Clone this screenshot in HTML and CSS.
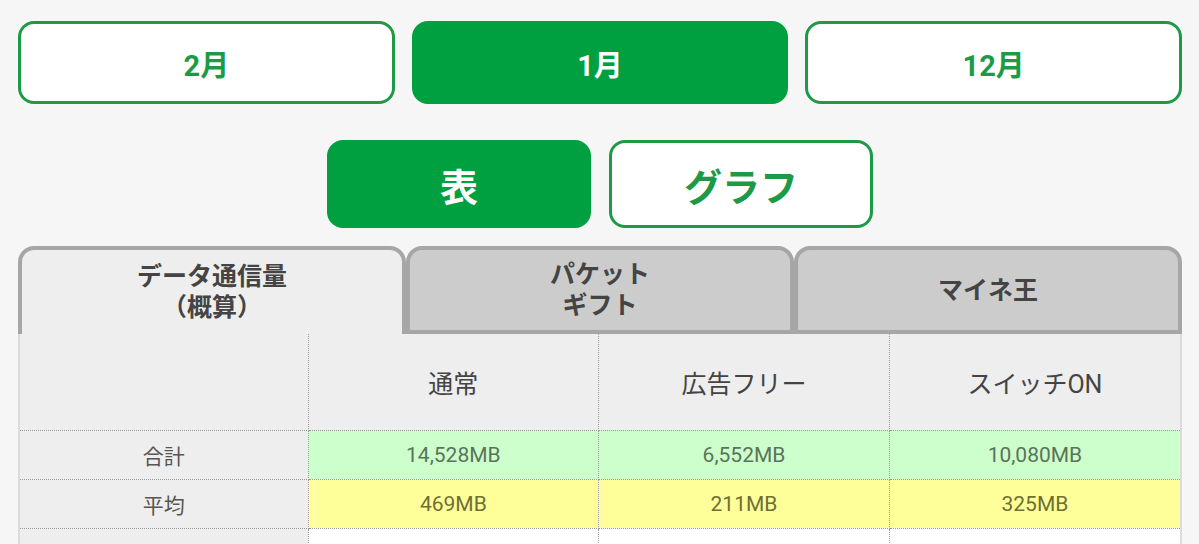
FILE: index.html
```html
<!DOCTYPE html>
<html lang="ja">
<head>
<meta charset="utf-8">
<title>データ通信量</title>
<link rel="stylesheet" href="styles.css">
</head>
<body>
<div class="page">
  <div class="months">
    <button class="btn outline">2月</button>
    <button class="btn filled">1月</button>
    <button class="btn outline">12月</button>
  </div>
  <div class="views">
    <button class="btn big filled">表</button>
    <button class="btn big outline">グラフ</button>
  </div>
  <div class="tabs">
    <div class="tab active">データ通信量<br>（概算）</div>
    <div class="tab">パケット<br>ギフト</div>
    <div class="tab">マイネ王</div>
  </div>
  <div class="panel">
    <table class="data">
      <colgroup>
        <col class="c-label">
        <col>
        <col>
        <col>
      </colgroup>
      <tr class="head">
        <td></td>
        <td>通常</td>
        <td>広告フリー</td>
        <td>スイッチON</td>
      </tr>
      <tr class="total">
        <td class="label">合計</td>
        <td>14,528MB</td>
        <td>6,552MB</td>
        <td>10,080MB</td>
      </tr>
      <tr class="avg">
        <td class="label">平均</td>
        <td>469MB</td>
        <td>211MB</td>
        <td>325MB</td>
      </tr>
      <tr class="plain">
        <td class="label"></td>
        <td></td>
        <td></td>
        <td></td>
      </tr>
    </table>
  </div>
</div>
</body>
</html>
```

FILE: styles.css
```css
* { box-sizing: border-box; }
html, body {
  margin: 0;
  padding: 0;
  background: #f5f6f5;
  font-family: Roboto, "Noto Sans CJK JP", sans-serif;
}
.page {
  padding: 21px 17px 0 18px;
}
.months {
  display: grid;
  grid-template-columns: 1fr 1fr 1fr;
  column-gap: 17px;
}
.btn {
  font-family: Roboto, "Noto Sans CJK JP", sans-serif;
  font-weight: bold;
  border-radius: 16px;
  height: 83px;
  font-size: 29px;
  padding: 0;
  cursor: pointer;
}
.btn.outline {
  background: #ffffff;
  border: 3px solid #1d9a45;
  color: #1d9a45;
}
.btn.filled {
  background: #00a040;
  border: 3px solid #00a040;
  color: #ffffff;
}
.views {
  display: flex;
  justify-content: center;
  gap: 18px;
  margin-top: 36px;
}
.btn.big {
  width: 264px;
  height: 88px;
  font-size: 38px;
}
.tabs {
  display: grid;
  grid-template-columns: 1fr 1fr 1fr;
  margin-top: 18px;
}
.tab {
  height: 88px;
  border: 4px solid #a6a6a6;
  border-radius: 16px 16px 0 0;
  background: #cccccc;
  color: #444444;
  font-weight: bold;
  font-size: 25px;
  line-height: 31px;
  display: flex;
  align-items: center;
  justify-content: center;
  text-align: center;
}
.tab.active {
  background: #eeeeee;
  border-bottom: none;
}
.panel {
  border-left: 2px solid #dcdcdc;
  border-right: 2px solid #dcdcdc;
  background: #eeeeee;
}
.data {
  width: 100%;
  border-collapse: collapse;
  table-layout: fixed;
}
.data col.c-label { width: 288px; }
.data td {
  border-right: 1px dotted #999999;
  border-bottom: 1px dotted #999999;
  text-align: center;
  padding: 0;
  font-size: 21px;
  color: #555555;
}
.data td:last-child { border-right: none; }
.head td {
  height: 96px;
  font-size: 25px;
  color: #444444;
  background: #eeeeee;
}
.total td, .avg td {
  height: 49px;
}
.total td { background: #ccffcc; color: #5a735a; }
.avg td { background: #ffff99; color: #6e6e35; }
.data td.label { background: #eeeeee; color: #555555; }
.plain td { height: 20px; background: #ffffff; }
```
